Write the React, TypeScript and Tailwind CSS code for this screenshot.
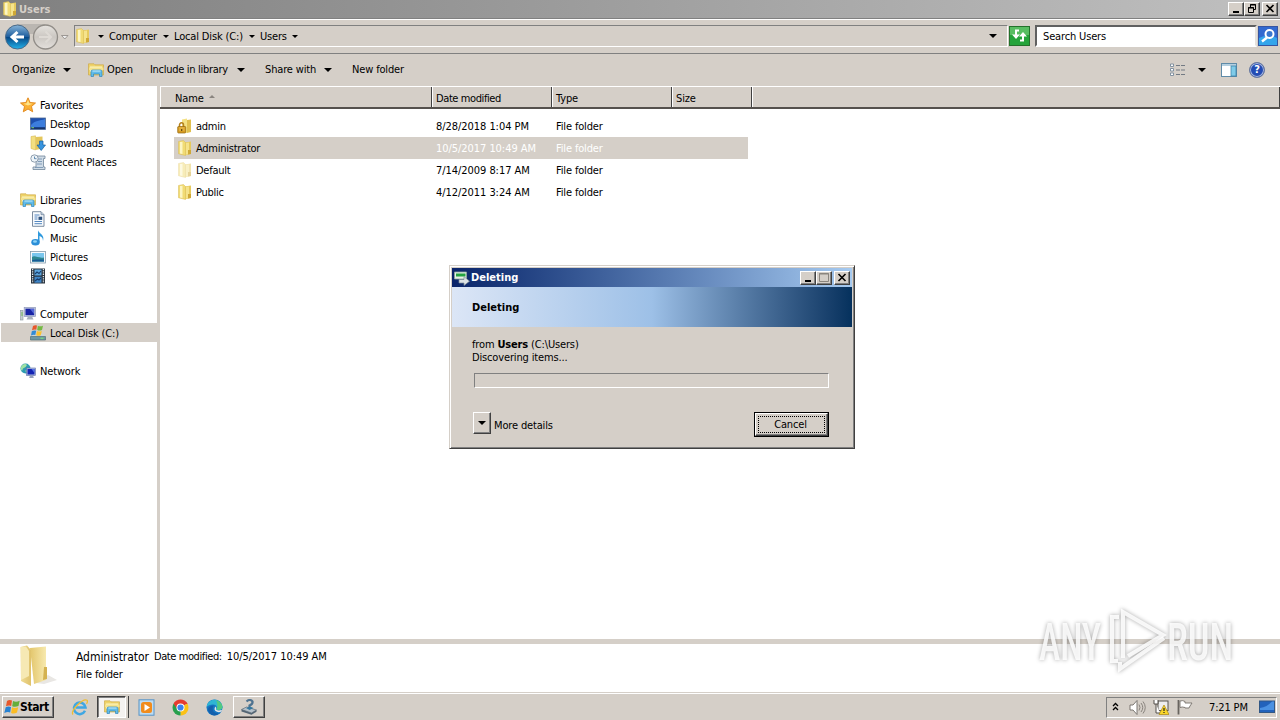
import React from "react";

interface IconProps {
  className?: string;
}

const FolderIcon = ({ className = "size-4" }: IconProps) => (
  <svg className={className} viewBox="0 0 16 16">
    <path d="M7.500 2.500 14 1.500V14L8 15.200z" fill="#e6ca5e" />
    <path d="M8.500 3 12 2.500V14L8.500 14.700z" fill="#f5e38c" />
    <path d="M1.500 1.500 6.500.5 8.500 2.500V15.500L1.500 13.800z" fill="#f1db74" stroke="#d8bb55" strokeWidth=".5" />
    <path d="M3 2 5.500 1.700V14L3 13.500z" fill="#fcf5c4" />
    <path d="M11 10h3v4l-3 .6z" fill="#cfa836" />
  </svg>
);

const LockFolderIcon = () => (
  <svg className="size-4" viewBox="0 0 16 16">
    <path d="M5 1.500 10 .5V15L5 14z" fill="#f4e184" />
    <path d="M10 2 14 1.500V14L10 15z" fill="#e1c04f" />
    <path d="M2.500 9V7a2 2.300 0 0 1 4 0V9" fill="none" stroke="#b5821e" strokeWidth="1.500" />
    <rect x=".7" y="8.500" width="8" height="6.500" rx=".8" fill="#d79c22" stroke="#94670f" strokeWidth=".7" />
    <path d="M2 10h5.500M2 12h5.500" stroke="#f6d672" strokeWidth=".7" />
    <path d="M4.700 11v2" stroke="#5f420b" strokeWidth="1.200" />
  </svg>
);

const LibraryIcon = ({ className = "size-4" }: IconProps) => (
  <svg className={className} viewBox="0 0 16 16">
    <path d="M.5 3V1.800H6l1 1h8.500V13H.5z" fill="#eed36a" stroke="#c9a53c" strokeWidth=".6" />
    <path d="M2 4.500h12V10H2z" fill="#fbf3c0" />
    <path d="M1 5.500h14.500V8H1z" fill="#f6e48d" />
    <path d="M3 14.500V9.500a1.500 1.500 0 0 1 1.500-1.500h8A1.500 1.500 0 0 1 14 9.500v5h-2.500V12h-6v2.500z" fill="#62bce8" stroke="#2f86bd" strokeWidth=".7" />
    <path d="M4.500 9h8" stroke="#c6ecfb" />
  </svg>
);

const StarIcon = () => (
  <svg className="size-4" viewBox="0 0 16 16">
    <path d="M8 .8 10.100 5.500 15.500 6 11.500 9.500 12.700 14.800 8 12 3.300 14.800 4.500 9.500.5 6 5.900 5.500z" fill="#fbb034" stroke="#e08417" strokeWidth=".9" />
    <path d="M8 2.800 9.300 6.300 12.800 6.800 8 8.500 3.500 6.800 6.700 6.300z" fill="#ffe489" />
  </svg>
);

const DesktopIcon = () => (
  <svg className="size-4" viewBox="0 0 16 16">
    <rect x=".5" y="2" width="15" height="11.500" fill="#1d4fae" stroke="#4d6996" strokeWidth=".8" />
    <path d="M1 9C5 4 10 5 15 3V11H1z" fill="#3c7ddd" />
    <path d="M1 11.500h14v1.500H1z" fill="#173567" />
    <path d="M1.500 11.700h2.500" stroke="#7fd06a" />
  </svg>
);

const DownloadsIcon = () => (
  <svg className="size-4" viewBox="0 0 16 16">
    <path d="M1 1.500 5.500.8V15L1 13.500z" fill="#f3df80" stroke="#d0ae44" strokeWidth=".5" />
    <path d="M5.500 2 12.500 1.500V13.500L5.500 15z" fill="#e4c65b" />
    <path d="M9.500 6h3.500v4h2.500L11.200 15.500 7 10h2.500z" fill="#3794df" stroke="#19609e" strokeWidth=".7" />
  </svg>
);

const RecentIcon = () => (
  <svg className="size-4" viewBox="0 0 16 16">
    <path d="M6 2h9v2.500h-1.500V13H15v2.500H3V13h3z" fill="#cfdbe6" stroke="#71869a" strokeWidth=".8" />
    <path d="M8 5h4M8 7.500h4M7 10h5M5 13.500h8" stroke="#6e8dac" strokeWidth=".8" />
    <circle cx="4.500" cy="4.500" r="3.700" fill="#eef4f8" stroke="#8495a6" strokeWidth=".9" />
    <path d="M4.500 2.500v2.200h2" fill="none" stroke="#3e6e9c" strokeWidth=".8" />
  </svg>
);

const DocumentIcon = () => (
  <svg className="size-4" viewBox="0 0 16 16">
    <path d="M2.500.7H11L14 3.700V15.300H2.500z" fill="#f7fafd" stroke="#6d8096" strokeWidth=".9" />
    <path d="M11 .7V3.700H14" fill="#bfd0e0" stroke="#6d8096" strokeWidth=".7" />
    <path d="M4.500 4h5M4.500 6h3M4.500 8h3M4.500 10.500h7.500M4.500 12.700h7.500" stroke="#4079b9" strokeWidth=".9" />
    <rect x="8.500" y="5.700" width="3.700" height="3.200" fill="#2d517d" />
  </svg>
);

const MusicIcon = () => (
  <svg className="size-4" viewBox="0 0 16 16">
    <path d="M8 .3C9 4 15 4.500 13 11 12.800 7.500 11.500 6.800 9.500 6V12H8z" fill="#2f9ade" />
    <ellipse cx="5.500" cy="12.200" rx="4.200" ry="3.300" fill="#2b8fd8" />
    <ellipse cx="5" cy="11.500" rx="2" ry="1.200" fill="#8fd5f7" />
  </svg>
);

const PictureIcon = () => (
  <svg className="size-4" viewBox="0 0 16 16">
    <rect x=".5" y="2.500" width="15" height="11.500" fill="#f6fafd" stroke="#8499aa" strokeWidth=".8" />
    <rect x="2" y="4" width="12" height="8.500" fill="#79c6ed" />
    <path d="M2 8C5 6 8 9.500 14 8.500V12.500H2z" fill="#2d8791" />
    <path d="M2 11.300C7 9.500 9 11 14 10.500V12.500H2z" fill="#195c96" />
  </svg>
);

const VideoIcon = () => (
  <svg className="size-4" viewBox="0 0 16 16">
    <rect x="1" y=".5" width="14" height="15" fill="#28323c" />
    <path d="M2.600 1v14M13.400 1v14" stroke="#e0e8ee" strokeWidth="1.300" strokeDasharray="1.300 1" />
    <rect x="4.500" y="1.500" width="7" height="6" fill="#5ca5de" />
    <rect x="4.500" y="8.700" width="7" height="6" fill="#3f85c7" />
    <path d="m5 6 2-2 2 1.500 2-2.500M5 13l2.500-2 1.500 1 2-2" fill="none" stroke="#183f6e" strokeWidth="1.200" />
  </svg>
);

const ComputerIcon = () => (
  <svg className="size-4" viewBox="0 0 16 16">
    <rect x=".5" y="4.500" width="2.500" height="9.500" fill="#c5ccd0" stroke="#8b979e" strokeWidth=".6" />
    <path d="M1 7h2M1 9h2" stroke="#70b95b" />
    <rect x="4.200" y="1.500" width="11.300" height="9" fill="#c0c9e1" stroke="#8d97b8" strokeWidth=".7" />
    <rect x="5.500" y="2.700" width="8.700" height="6.500" fill="#1823a5" />
    <path d="M10 3h4v5z" fill="#5266d8" />
    <path d="M8 10.500h4l1.500 3H6.500z" fill="#a7afbd" />
  </svg>
);

const DiskIcon = () => (
  <svg className="size-4" viewBox="0 0 16 16">
    <path d="M2.500 9h11l2 2.500H.5z" fill="#cbd4d8" />
    <path d="M.5 11.500h15v3.500H.5z" fill="#6e97a3" stroke="#45656f" strokeWidth=".6" />
    <path d="M10.500 13.200h3" stroke="#79f275" />
    <path d="M3 1Q5-.3 7 .5L6.300 4.700Q4.500 4 2 5.200z" fill="#e7582b" />
    <path d="M7.800.7Q10 2 13 .7L12 5Q9.300 6 7.200 5z" fill="#74b943" />
    <path d="M1.800 6.200Q4.200 5 6.200 5.700L5.300 10Q3.500 9.400 1 10.500z" fill="#328bd5" />
    <path d="M7 6Q9 7 11.800 6L10.800 10.200Q8.500 11.200 6.200 10.200z" fill="#fbc12d" />
  </svg>
);

const NetworkIcon = () => (
  <svg className="size-4" viewBox="0 0 16 16">
    <circle cx="5.500" cy="5.500" r="5" fill="#2d9ab2" />
    <path d="M2 2.500Q5 0 7 2 6 4.500 3 5.500L2 8Q-.5 5 2 2.500M5 8l3-2v4z" fill="#a0e2a3" />
    <rect x="6.500" y="5" width="9" height="7.500" fill="#aebbe1" stroke="#5a6ba5" strokeWidth=".6" />
    <rect x="7.500" y="6" width="7" height="5.500" fill="#1424b4" />
    <path d="M11.500 6h3v4z" fill="#5473e5" />
    <path d="M10 12.500h3l.8 2.500H9.200z" fill="#98a2bc" />
  </svg>
);

const FlagIcon = ({ className = "size-4" }: IconProps) => (
  <svg className={className} viewBox="0 0 16 16">
    <path d="M3 2Q5.500.2 8 1.600L7.200 7Q5 5.700 2 7.300z" fill="#e7582b" />
    <path d="M9 2Q12 3.600 15.700 1.800L14.500 7Q11 8.500 8.200 7.200z" fill="#66ae3a" />
    <path d="M1.700 8.300Q4.500 6.900 7 8.100L6.200 13.500Q3.800 12.300.3 13.900z" fill="#2782d2" />
    <path d="M8 8.300Q10.800 9.600 14.200 8.200L13 13.500Q10 15.300 7.100 13.900z" fill="#fbbc24" />
  </svg>
);

const Arrow = ({ className = "" }: IconProps) => (
  <span className={`block size-0 border-x-4 border-t-4 border-x-transparent border-t-black ${className}`} />
);

const SmallArrow = () => <span className="block size-0 border-x-3 border-t-3 border-x-transparent border-t-black" />;

const raised =
  "bg-[#d5cfc8] border border-t-white border-l-white border-r-[#404040] border-b-[#404040] shadow-[inset_-1px_-1px_0_#808080]";

const WindowButtons = ({ restore = false }: { restore?: boolean }) => (
  <div className="flex">
    <div className={`flex h-[14px] w-[16px] items-center justify-center ${raised}`}>
      <svg className="h-[12px] w-[14px]" viewBox="0 0 14 12">
        <path d="M4 9h6" stroke="#000" strokeWidth="2" />
      </svg>
    </div>
    <div className={`flex h-[14px] w-[16px] items-center justify-center ${raised}`}>
      <svg className="h-[12px] w-[14px]" viewBox="0 0 14 12" fill="none">
        {restore ? (
          <path d="M5.500 4V1.500h5v5H9M5 2h6M3.500 4.500h5v5h-5zM3 5h6" stroke="#000" />
        ) : (
          <path d="M2.500 1.500h9v8h-9zM2 2h10" stroke="#8a857e" />
        )}
      </svg>
    </div>
    <div className={`ml-[2px] flex h-[14px] w-[16px] items-center justify-center ${raised}`}>
      <svg className="h-[12px] w-[14px]" viewBox="0 0 14 12">
        <path d="m3.500 2 7 7m0-7-7 7" stroke="#000" strokeWidth="1.600" />
      </svg>
    </div>
  </div>
);

const AddressBar = () => (
  <div className="flex h-[36px] items-center border-t border-b border-t-[#808080] border-b-[#808080] bg-[#d5cfc8] shadow-[inset_0_1px_0_#fff,0_1px_0_#fff]">
    <svg className="h-[30px] w-[70px] shrink-0" viewBox="0 0 70 30">
      <defs>
        <linearGradient id="back" x2="0" y2="1">
          <stop offset="0" stopColor="#87b5d9" />
          <stop offset=".48" stopColor="#1f5f9f" />
          <stop offset=".5" stopColor="#064584" />
          <stop offset="1" stopColor="#22b2ea" />
        </linearGradient>
        <linearGradient id="forward" x2="0" y2="1">
          <stop offset="0" stopColor="#e6e3df" />
          <stop offset=".5" stopColor="#cbc7c2" />
          <stop offset="1" stopColor="#e4e0dc" />
        </linearGradient>
      </defs>
      <path d="M17 3h28v10H17z" fill="#bab6b1" />
      <circle cx="17.500" cy="16" r="12" fill="url(#back)" stroke="#4a6a88" />
      <path d="M24 16H12m5.500-5L12 16l5.500 5" fill="none" stroke="#fff" strokeWidth="3" />
      <circle cx="45.500" cy="16" r="12" fill="url(#forward)" stroke="#918d88" strokeWidth="1.300" />
      <path d="M39 16h12m-5.500-5.500L51 16l-5.500 5.500" fill="none" stroke="#dedad5" strokeWidth="2" />
      <path d="M61.500 14.500h6.500l-3.200 3.500z" fill="#eee" stroke="#8b8781" strokeWidth=".8" />
    </svg>
    <div className="ml-1 flex h-[22px] flex-1 items-center border border-t-[#808080] border-l-[#808080] border-r-white border-b-white">
      <FolderIcon className="size-4" />
      <div className="ml-[7px] flex items-center gap-[5px]">
        <SmallArrow />
        <span className="pt-px">Computer</span>
        <span className="pl-px">
          <SmallArrow />
        </span>
        <span className="pt-px">Local Disk (C:)</span>
        <span className="pl-px">
          <SmallArrow />
        </span>
        <span className="pt-px">Users</span>
        <SmallArrow />
      </div>
      <Arrow className="mr-[10px] ml-auto" />
    </div>
    <svg className="ml-[1px] h-[20px] w-[21px]" viewBox="0 0 21 20">
      <rect x=".5" y=".5" width="20" height="19" fill="#25a33b" stroke="#24712c" />
      <path d="M1 1h19v8H1z" fill="#58bd62" />
      <path d="M10 4.500H7V9M14 9.500v5h-3" fill="none" stroke="#fff" strokeWidth="2" />
      <path d="M3 8.500h8L7 13zM10 10.500h8L14 6z" fill="#fff" />
    </svg>
    <div className="ml-[5px] flex h-[22px] w-[222px] items-center border-2 border-t-[#606060] border-l-[#606060] border-r-[#e5e1dc] border-b-white bg-white pt-[2px] pl-[6px]">
      Search Users
    </div>
    <svg className="mr-[2px] ml-[1px] h-[20px] w-[20px]" viewBox="0 0 20 20">
      <rect x=".5" y=".5" width="19" height="19" fill="#3169d0" stroke="#3655a0" />
      <path d="M1 12Q10 7 19 12V19H1z" fill="#33a5eb" />
      <path d="m9 11.500-5 4" stroke="#fff" strokeWidth="2.500" />
      <circle cx="11.500" cy="8" r="4" fill="#3977cf" stroke="#fff" strokeWidth="2" />
    </svg>
  </div>
);

const Toolbar = () => (
  <div className="flex h-[32px] items-center bg-[#d5cfc8] pl-3">
    <span className="w-[51px]">Organize</span>
    <Arrow />
    <LibraryIcon className="ml-[17px] size-4" />
    <span className="ml-[3px] w-[43px]">Open</span>
    <span className="w-[87px] tracking-[-0.3px]">Include in library</span>
    <Arrow />
    <span className="ml-[20px] w-[59px]">Share with</span>
    <Arrow />
    <span className="ml-[20px]">New folder</span>
    <svg className="ml-auto h-[14px] w-[16px]" viewBox="0 0 16 14">
      <path d="M.5 1h3v2.500h-3zM.5 5.500h3V8h-3zM.5 10h3v2.500h-3z" fill="#fff" stroke="#77899a" strokeWidth=".9" />
      <path d="M6 2.500h4m1 0h4M6 7h4m1 0h4M6 11.500h4m1 0h4" stroke="#727a83" />
    </svg>
    <Arrow className="ml-[12px]" />
    <svg className="ml-[15px] h-[14px] w-[16px]" viewBox="0 0 16 14">
      <rect x=".5" y=".5" width="15" height="13" fill="#fff" stroke="#5f8ba8" />
      <path d="M1 2h14" stroke="#6ba0c1" />
      <rect x="10" y="3" width="5" height="10" fill="#7fcbe8" stroke="#347ba3" strokeWidth=".7" />
    </svg>
    <div className="mr-[15px] ml-[12px] flex size-[16px] items-center justify-center rounded-full border border-[#69799e] bg-[#244cb4] text-[11px] font-bold text-white shadow-[inset_0_0_0_1px_#a9b8df]">
      ?
    </div>
  </div>
);

const places = [
  { name: "Favorites", icon: <StarIcon />, top: true },
  { name: "Desktop", icon: <DesktopIcon /> },
  { name: "Downloads", icon: <DownloadsIcon /> },
  { name: "Recent Places", icon: <RecentIcon /> },
  null,
  { name: "Libraries", icon: <LibraryIcon />, top: true },
  { name: "Documents", icon: <DocumentIcon /> },
  { name: "Music", icon: <MusicIcon /> },
  { name: "Pictures", icon: <PictureIcon /> },
  { name: "Videos", icon: <VideoIcon /> },
  null,
  { name: "Computer", icon: <ComputerIcon />, top: true },
  { name: "Local Disk (C:)", icon: <DiskIcon />, active: true },
  null,
  { name: "Network", icon: <NetworkIcon />, top: true },
];

const Sidebar = () => (
  <div className="w-[160px] shrink-0 border-r-3 border-[#d5cfc8] bg-white pt-[9px] pl-px">
    {places.map((place, i) =>
      place ? (
        <div
          key={i}
          className={`flex h-[19px] items-center gap-[4px] ${place.top ? "pl-[19px]" : "pl-[29px]"} ${
            place.active ? "bg-[#d5cfc8]" : ""
          }`}
        >
          {place.icon}
          <span className="pt-[2px]">{place.name}</span>
        </div>
      ) : (
        <div key={i} className="h-[19px]" />
      )
    )}
  </div>
);

const files = [
  { name: "admin", date: "8/28/2018 1:04 PM", icon: <LockFolderIcon /> },
  { name: "Administrator", date: "10/5/2017 10:49 AM", icon: <FolderIcon />, selected: true },
  { name: "Default", date: "7/14/2009 8:17 AM", icon: <FolderIcon className="size-4 opacity-50" /> },
  { name: "Public", date: "4/12/2011 3:24 AM", icon: <FolderIcon /> },
];

const headerCell = "flex items-center border-r border-l border-r-[#404040] border-l-white pt-[3px]";

const FileList = () => (
  <div className="flex-1 bg-white">
    <div className="flex h-[23px] border-t border-b-2 border-t-white border-b-[#55514d] bg-[#d5cfc8]">
      <div className={`w-[272px] gap-[5px] pl-[14px] ${headerCell}`}>
        Name
        <span className="mb-1 block size-0 border-x-3 border-b-3 border-x-transparent border-b-[#8a8580]" />
      </div>
      <div className={`w-[120px] pl-[3px] tracking-[-0.4px] ${headerCell}`}>Date modified</div>
      <div className={`w-[120px] pl-[3px] ${headerCell}`}>Type</div>
      <div className={`w-[80px] pl-[3px] ${headerCell}`}>Size</div>
      <div className={`flex-1 ${headerCell}`} />
    </div>
    <div className="pt-[6px] pl-[14px]">
      {files.map((file) => (
        <div key={file.name} className={`flex h-[22px] w-[574px] items-center pl-[3px] ${file.selected ? "bg-[#d5cfc8]" : ""}`}>
          {file.icon}
          <span className="ml-[3px] w-[240px] pt-[2px] tracking-[-0.25px]">{file.name}</span>
          <span className={`w-[120px] pt-[2px] tracking-[-0.05px] ${file.selected ? "text-white" : ""}`}>{file.date}</span>
          <span className={`pt-[2px] ${file.selected ? "text-white" : ""}`}>File folder</span>
        </div>
      ))}
    </div>
  </div>
);

const Details = () => (
  <div className="flex h-[53px] border-t-5 border-[#d5cfc8] bg-white">
    <svg className="ml-[18px] h-[46px] w-[42px]" viewBox="0 0 42 46">
      <defs>
        <linearGradient id="folder">
          <stop offset="0" stopColor="#f0dc96" />
          <stop offset="1" stopColor="#dfc26b" />
        </linearGradient>
        <linearGradient id="folderBack">
          <stop offset="0" stopColor="#e3c66c" />
          <stop offset="1" stopColor="#f7e9ae" />
        </linearGradient>
      </defs>
      <path d="M18 39 30 31 39 36 26 40z" fill="#e9e7e4" />
      <path d="M12 4 28 2.500V36L16 40z" fill="url(#folderBack)" />
      <path d="M26 23h3V35l-4 1z" fill="#d4b251" />
      <path d="M2.500 3 9 1.500 13 6V42L3 37z" fill="url(#folder)" />
      <path d="M3 3 8 2.500 11 7V32L3 36z" fill="#f6e9b4" />
    </svg>
    <div className="ml-[16px] pt-[4px] leading-[18px]">
      <div className="flex gap-[5px]">
        <span className="text-[12px] tracking-[-0.05px]">Administrator</span>
        <span className="tracking-[-0.4px]">Date modified:</span>
        <span className="tracking-[-0.05px]">10/5/2017 10:49 AM</span>
      </div>
      <div>File folder</div>
    </div>
  </div>
);

const DeletingDialog = () => (
  <div className="absolute top-[265px] left-[449px] h-[184px] w-[406px] border border-t-[#d5cfc8] border-l-[#d5cfc8] border-r-[#404040] border-b-[#404040] bg-[#d5cfc8] p-[2px] shadow-[inset_1px_1px_0_#fff,inset_-1px_-1px_0_#808080]">
    <div className="flex h-[19px] items-center bg-linear-to-r from-[#0a246a] to-[#a6caf0] pl-[2px]">
      <svg className="size-4" viewBox="0 0 16 16">
        <path d="M.5 2h12v7H.5z" fill="#e7f2e8" stroke="#8ca79a" strokeWidth=".8" />
        <path d="M2 3.500h9.500v3H2z" fill="#23a341" />
        <path d="M5 9.500h5V6.500l5.500 4.700L10 15.500V13H5z" fill="#dce2e5" stroke="#7c8b95" strokeWidth=".7" />
      </svg>
      <span className="ml-[1px] flex-1 font-bold tracking-normal text-white">Deleting</span>
      <div className="mr-[2px]">
        <WindowButtons />
      </div>
    </div>
    <div className="flex h-[40px] items-center bg-linear-to-r from-[#dce6f6] via-[#9dc0e7] to-[#05315d] pt-px pl-[20px] font-bold tracking-normal">
      Deleting
    </div>
    <div className="pt-[11px] pr-[23px] pl-[20px]">
      <div className="leading-[13px]">
        from <b>Users</b> (C:\Users)
      </div>
      <div className="leading-[13px]">Discovering items...</div>
      <div className="mt-[9px] ml-[2px] h-[15px] border border-t-[#808080] border-l-[#808080] border-r-white border-b-white" />
      <div className="mt-[24px] ml-[1px] flex">
        <div className={`flex h-[22px] w-[18px] items-center justify-center ${raised}`}>
          <Arrow />
        </div>
        <span className="mt-[7px] ml-[3px]">More details</span>
        <div className="ml-auto h-[25px] w-[75px] border border-black">
          <div className={`flex h-full items-center justify-center p-[2px] ${raised}`}>
            <div className="flex h-full w-full items-center justify-center border border-dotted border-black pr-[2px]">Cancel</div>
          </div>
        </div>
      </div>
    </div>
  </div>
);

const Watermark = () => (
  <svg
    className="absolute top-[600px] left-[1030px] h-[80px] w-[215px] overflow-visible drop-shadow-[0_0_2px_#0006]"
    viewBox="0 0 215 80"
    fontFamily="Roboto, sans-serif"
  >
    <g fill="#fff" fillOpacity=".85" fontSize="52" fontWeight="500">
      <text x="9" y="60" textLength="62" lengthAdjust="spacingAndGlyphs">
        ANY
      </text>
      <text x="137" y="60" textLength="66" lengthAdjust="spacingAndGlyphs">
        RUN
      </text>
    </g>
    <g fill="none" stroke="#fff" strokeWidth="4" strokeOpacity=".85">
      <path d="M89 17h-7v44h6" />
      <path d="M93 58V12L133 35 98 56" />
      <path d="M90 62v7l44-31" />
    </g>
  </svg>
);

const Taskbar = () => (
  <div className="flex h-[28px] items-center border-t border-[#d5cfc8] bg-[#d5cfc8] pt-px pl-[2px] shadow-[inset_0_1px_0_#fff]">
    <div className={`flex h-[22px] w-[52px] items-center pl-px font-bold ${raised}`}>
      <FlagIcon className="size-4" />
      <span className="text-[12px] tracking-[-0.4px]">Start</span>
    </div>
    <svg className="ml-[17px] size-[17px]" viewBox="0 0 17 17">
      <path d="M14 11.800A5.800 5.800 0 1 1 14.500 8.500H5" fill="none" stroke="#3fa7e3" strokeWidth="2.500" />
      <path d="M2 15.500C-1.500 12 12-1 16 1.200 17 2.500 16 4 15.500 4.800" fill="none" stroke="#efbd32" strokeWidth="1.300" />
    </svg>
    <div className="ml-[9px] flex h-[22px] w-[29px] items-center justify-center border border-t-[#404040] border-l-[#404040] border-r-white border-b-white bg-[#f4f2f0] shadow-[inset_1px_1px_0_#808080]">
      <LibraryIcon className="size-4" />
    </div>
    <div className="h-[22px] w-[3px] border-r border-[#404040]" />
    <svg className="ml-[9px] size-[17px]" viewBox="0 0 17 17">
      <rect x="1" y=".8" width="15" height="15.400" fill="#bddcf3" stroke="#5793c6" />
      <rect x="3" y="3" width="11" height="11" rx="2.500" fill="#f18c1d" />
      <path d="M6.500 5v7L12 8.500z" fill="#fff" />
    </svg>
    <svg className="ml-[17px] size-[17px]" viewBox="0 0 17 17">
      <path d="M8.500 8.500 1.600 4.500A8 8 0 0 1 15.400 4.500z" fill="#e53b30" />
      <path d="M8.500 8.500 15.400 4.500A8 8 0 0 1 8.500 16.500z" fill="#fbc116" />
      <path d="M8.500 8.500V16.500A8 8 0 0 1 1.600 4.500z" fill="#279f4d" />
      <path d="M8.500 5h7.100L14 3 3 3l-1.200 2 3.500 5z" fill="#e53b30" />
      <circle cx="8.500" cy="8.500" r="4" fill="#fff" />
      <circle cx="8.500" cy="8.500" r="3.100" fill="#3a82ef" />
    </svg>
    <svg className="ml-[17px] size-[17px]" viewBox="0 0 17 17">
      <circle cx="8.500" cy="8.500" r="8" fill="#1577c4" />
      <path d="M.6 8C2-2 15-1.500 16.500 7.500 17 11 12 12 10 10.500 12 8 10 5.500 7 5.500 4 5.500 2 6.500.6 8z" fill="#2fb5d4" />
      <path d="M10 1Q16 3 16.500 8 16 11 12 11L10.500 10.200Q12.500 6 10 1" fill="#53c981" />
      <path d="M9.500 7.500Q7.500 10 9.500 12 12 14 15.500 12.500 16.500 11.500 15.500 11 12 12 10 10.500 10.800 9 9.500 7.500" fill="#e4e6e6" />
      <path d="M2 11Q2 6.500 8 6.500 5.500 9 7.500 12.500 9.500 14.800 13 14.500 10 17 7 16.300 3 15 2 11" fill="#1460ac" />
    </svg>
    <div className={`ml-[10px] flex h-[22px] w-[32px] items-center justify-center ${raised}`}>
      <svg className="size-4" viewBox="0 0 16 16">
        <path d="m.5 10.500 5-2.500 10 3-5 3z" fill="#b4c0c9" stroke="#5b6c79" strokeWidth=".7" />
        <path d="m.5 10.500v2l10 3.200 5-3v-1.700l-5 3z" fill="#536574" />
        <path d="M5.500 2.500Q9-.5 11.500 2.500 12 5 8.500 6.500V9" fill="none" stroke="#4f7391" strokeWidth="2.200" />
        <path d="m5 9 4-1.500 3.500 1.500L8.500 11z" fill="#34779f" />
      </svg>
    </div>
    <div className="mr-[3px] ml-auto flex h-[21px] w-[171px] items-center border border-t-[#808080] border-l-[#808080] border-r-white border-b-white">
      <svg className="ml-[5px] h-[10px] w-[7px]" viewBox="0 0 7 10">
        <path d="M1 4 3.500 1.500 6 4M1 8 3.500 5.500 6 8" fill="none" stroke="#000" strokeWidth="1.300" />
      </svg>
      <svg className="ml-[10px] size-[17px]" viewBox="0 0 17 17">
        <path d="M1 6h3l4-4.500v14L4 11H1z" fill="#fff" stroke="#716c67" strokeWidth=".9" />
        <path d="M10 5.500q2 3 0 6M12 4q3.500 4.500 0 9M14 2.500q4.500 6 0 12" fill="none" stroke="#807b75" strokeWidth=".9" />
      </svg>
      <svg className="ml-[7px] size-[16px]" viewBox="0 0 16 16">
        <rect x="5" y="2" width="10" height="9.500" fill="#eee" stroke="#595650" />
        <path d="M1 1v4h4V1M3 5v9h4" fill="#fff" stroke="#524f4b" />
        <path d="m11 6 5 9.500H6z" fill="#fad629" stroke="#a98611" strokeWidth=".7" />
        <path d="M11 9v3m0 1v1" stroke="#222" strokeWidth="1.200" />
      </svg>
      <svg className="ml-[8px] size-[16px]" viewBox="0 0 16 16">
        <path d="M1.500 1v14.500" stroke="#68645f" strokeWidth="1.800" />
        <path d="M3 2q3-1 5 .5V4h7l-2 3-1 2H8V8.500Q5 7.500 3 8.500z" fill="#fff" stroke="#77726c" strokeWidth=".9" />
      </svg>
      <span className="ml-[16px] pt-px whitespace-nowrap">7:21 PM</span>
      <svg className="mr-[1px] ml-auto h-[14px] w-[16px]" viewBox="0 0 16 14">
        <rect x=".5" y="1" width="15" height="11.500" fill="#2262bb" stroke="#315785" />
        <path d="M1 8Q8 7 13 1.500H15V10H1z" fill="#4a91e2" />
      </svg>
    </div>
  </div>
);

const App = () => {
  return (
    <div className="relative flex h-[720px] w-[1280px] flex-col overflow-hidden bg-[#d5cfc8] font-['DejaVu_Sans_Condensed','DejaVu_Sans',sans-serif] text-[11px] leading-[14px] tracking-[-0.15px] text-black [font-stretch:condensed]">
      <div className="flex h-[18px] shrink-0 items-center bg-linear-to-r from-[#808080] to-[#c0c0c0] pl-[2px]">
        <FolderIcon className="size-4" />
        <span className="ml-px flex-1 pt-px font-bold tracking-normal text-[#d5cfc8]">Users</span>
        <div className="mr-[2px]">
          <WindowButtons restore />
        </div>
      </div>
      <AddressBar />
      <Toolbar />
      <div className="flex min-h-0 flex-1">
        <Sidebar />
        <FileList />
      </div>
      <Details />
      <Taskbar />
      <DeletingDialog />
      <Watermark />
    </div>
  );
};

export default App;
